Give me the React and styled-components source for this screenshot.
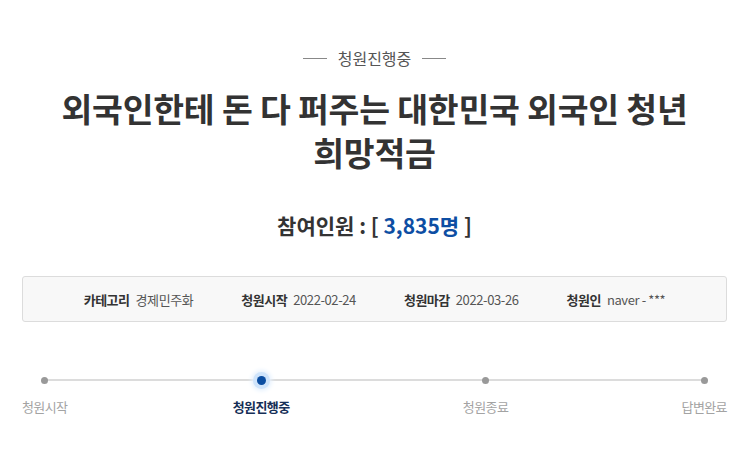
import React from 'react';
import styled, { createGlobalStyle } from 'styled-components';

const GlobalStyle = createGlobalStyle`
  * { box-sizing: border-box; }
  body {
    margin: 0;
    background: #fff;
    font-family: "Noto Sans CJK KR", "Noto Sans", sans-serif;
    color: #333;
  }
`;

const Page = styled.div`
  padding: 47px 18px 40px 22px;
  display: flex;
  flex-direction: column;
  align-items: center;
`;

const Status = styled.div`
  display: flex;
  align-items: center;
  gap: 11px;
  font-size: 16px;
  line-height: 22px;
  color: #555;
  &::before, &::after {
    content: '';
    width: 24px;
    height: 1px;
    background: #888;
  }
`;

const Title = styled.h1`
  margin: 17px 0 0;
  font-size: 33.5px;
  line-height: 44px;
  font-weight: 700;
  color: #333;
  text-align: center;
  letter-spacing: -0.2px;
`;

const Count = styled.div`
  margin-top: 36px;
  font-size: 21px;
  line-height: 30px;
  font-weight: 700;
  color: #333;
`;

const Num = styled.span`
  color: #0d4ea3;
`;

const InfoBox = styled.div`
  margin-top: 36px;
  width: 100%;
  height: 46px;
  display: flex;
  justify-content: center;
  align-items: center;
  gap: 48px;
  background: #f8f8f8;
  border: 1px solid #dcdcdc;
  border-radius: 3px;
`;

const InfoItem = styled.div`
  display: flex;
  align-items: baseline;
  gap: 6px;
  font-size: 13px;
`;

const Label = styled.span`
  font-weight: 700;
  color: #333;
  letter-spacing: -0.5px;
`;

const Value = styled.span`
  color: #555;
  letter-spacing: -0.4px;
`;

const Track = styled.div`
  position: relative;
  margin-top: 48px;
  width: 100%;
  display: flex;
  justify-content: space-between;
  &::before {
    content: '';
    position: absolute;
    top: 9px;
    left: 23px;
    right: 23px;
    height: 2px;
    background: #dcdcdc;
  }
`;

const Step = styled.div`
  position: relative;
  display: flex;
  flex-direction: column;
  align-items: center;
  gap: 8px;
  margin-left: ${p => (p.$shift ? `-${p.$shift}px` : '0')};
`;

const DotWrap = styled.div`
  width: 20px;
  height: 20px;
  display: flex;
  align-items: center;
  justify-content: center;
`;

const Dot = styled.span`
  width: ${p => (p.$active ? 9 : 7)}px;
  height: ${p => (p.$active ? 9 : 7)}px;
  border-radius: 50%;
  background: ${p => (p.$active ? '#0b4ea2' : '#999')};
  box-shadow: ${p => (p.$active ? '0 0 0 4px #cfe4fb, 0 0 4px 6px #e6f1fd' : 'none')};
`;

const StepLabel = styled.span`
  font-size: 13px;
  line-height: 18px;
  letter-spacing: -0.6px;
  color: ${p => (p.$active ? '#162f57' : '#a3a3a3')};
  font-weight: ${p => (p.$active ? 700 : 400)};
`;

const info = [
  ['카테고리', '경제민주화'],
  ['청원시작', '2022-02-24'],
  ['청원마감', '2022-03-26'],
  ['청원인', 'naver - ***'],
];

const steps = ['청원시작', '청원진행중', '청원종료', '답변완료'];

const App = () => (
  <>
    <GlobalStyle />
    <Page>
      <Status>청원진행중</Status>
      <Title>
        외국인한테 돈 다 퍼주는 대한민국 외국인 청년
        <br />
        희망적금
      </Title>
      <Count>
        참여인원 : [ <Num>3,835명</Num> ]
      </Count>
      <InfoBox>
        {info.map(([k, v]) => (
          <InfoItem key={k}>
            <Label>{k}</Label>
            <Value>{v}</Value>
          </InfoItem>
        ))}
      </InfoBox>
      <Track>
        {steps.map((s, i) => (
          <Step key={s} $shift={i === 1 ? 8 : 0}>
            <DotWrap>
              <Dot $active={i === 1} />
            </DotWrap>
            <StepLabel $active={i === 1}>{s}</StepLabel>
          </Step>
        ))}
      </Track>
    </Page>
  </>
);

export default App;
